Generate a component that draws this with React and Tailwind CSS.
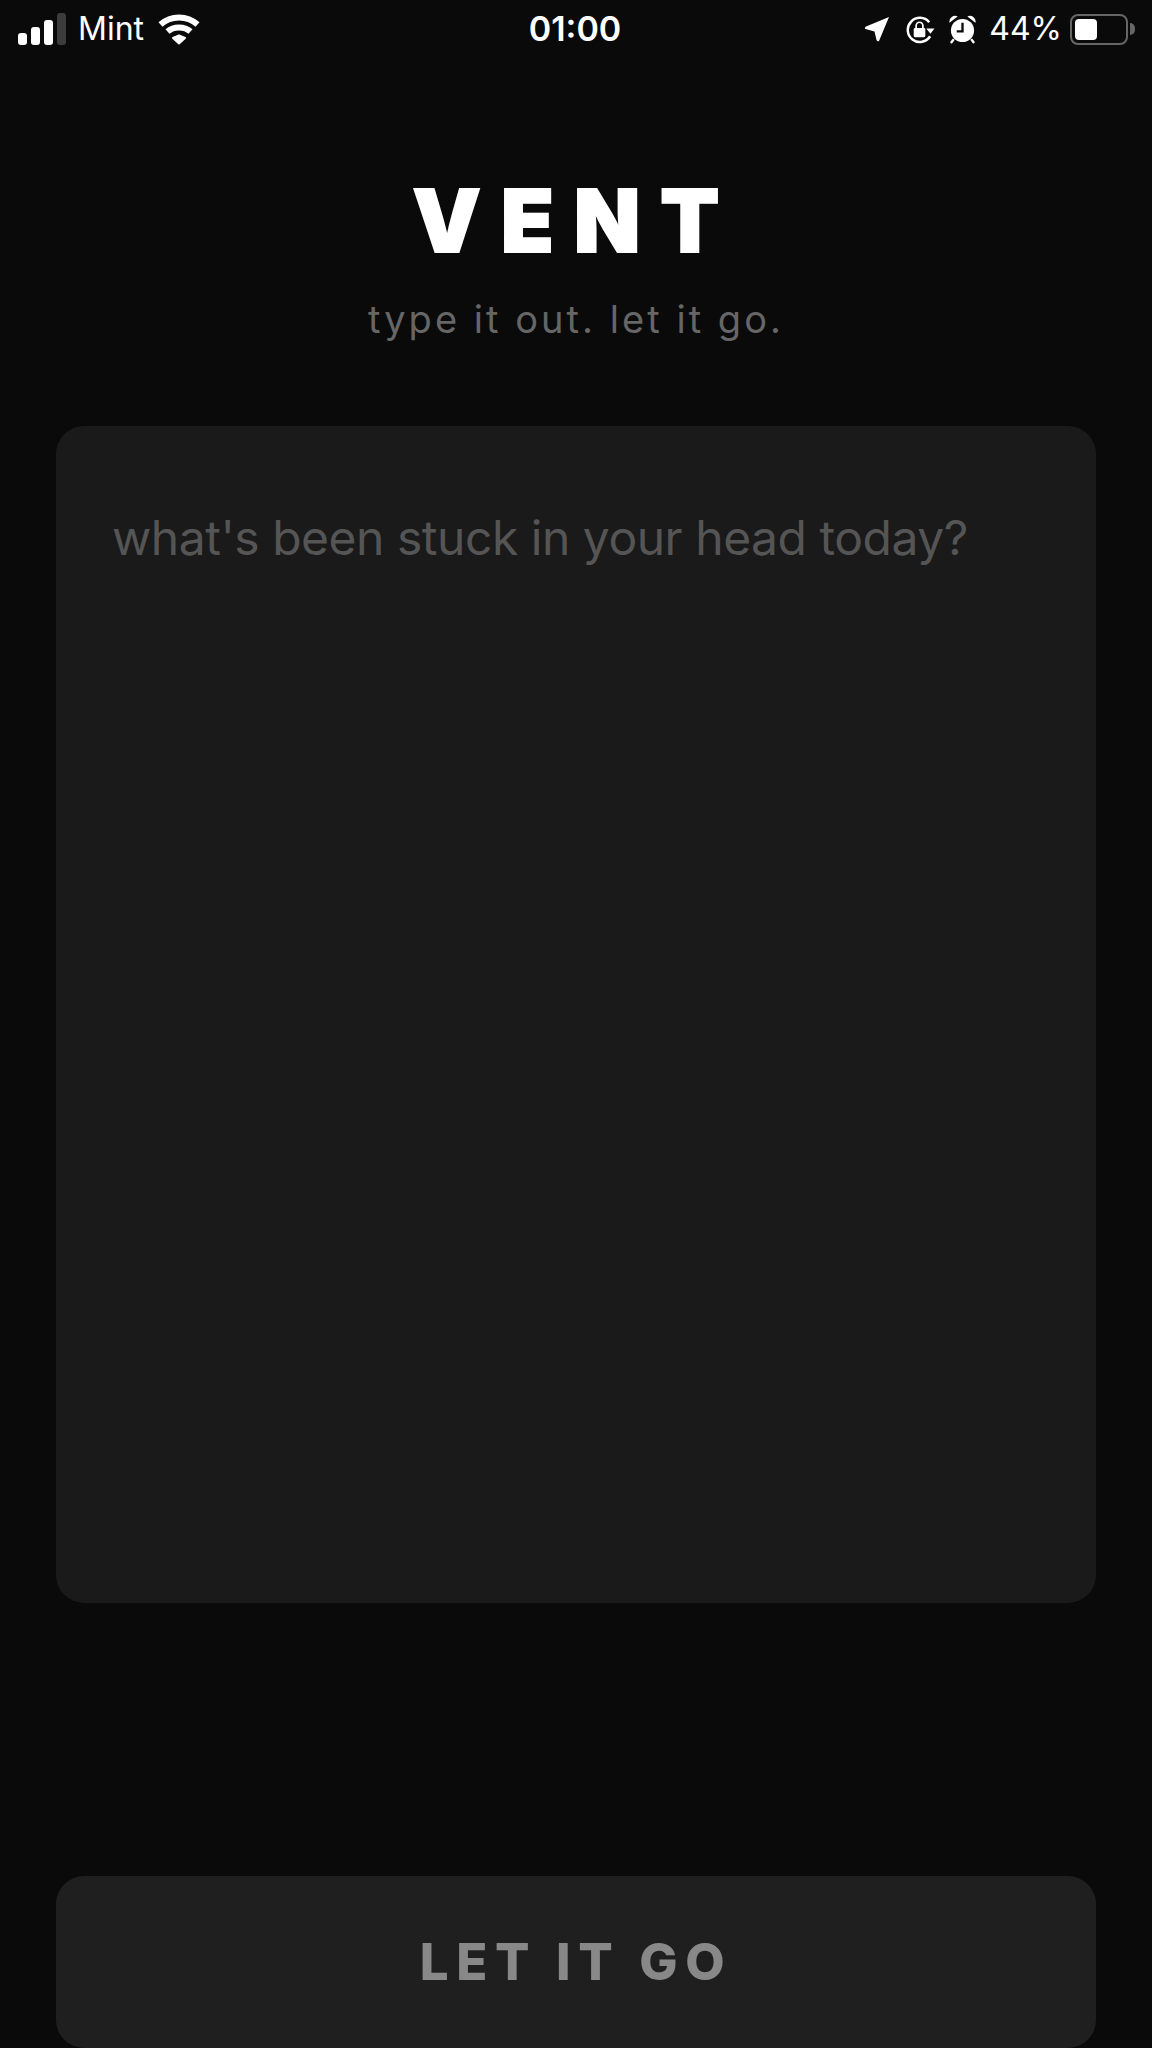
function SignalIcon() {
  return (
    <svg width="48" height="34" viewBox="0 0 48 34" fill="white">
      <rect x="0" y="21" width="9" height="12" rx="3" />
      <rect x="13" y="15" width="9" height="18" rx="3" />
      <rect x="26" y="8" width="9" height="25" rx="3" />
      <rect x="39" y="1" width="9" height="32" rx="3" fill="#3c3c3c" />
    </svg>
  );
}

function WifiIcon() {
  return (
    <svg width="42" height="32" viewBox="0 0 42 32" fill="none" stroke="white" strokeWidth="6">
      <path d="M2.5 11.5 C13 2 29 2 39.5 11.5" />
      <path d="M9.5 18.5 C15.5 13 26.5 13 32.5 18.5" />
      <path d="M15 25 L21 22.5 L27 25 L21 30.5 Z" fill="white" stroke="white" strokeWidth="2" strokeLinejoin="round" />
    </svg>
  );
}

function LocationIcon() {
  return (
    <svg width="26" height="26" viewBox="0 0 26 26" fill="white">
      <path d="M25 1 L15 25 Q13.5 26 12.5 24 L10.5 15.5 L1.5 13 Q0 12 2 10.5 Z" />
    </svg>
  );
}

function RotationLockIcon() {
  return (
    <svg width="30" height="29" viewBox="0 0 30 30" fill="none">
      <path d="M24.5 7.5 A12.5 12.5 0 1 0 25.5 22" stroke="white" strokeWidth="2.6" />
      <path d="M21.5 14 H30 L25.8 19.5 Z" fill="white" />
      <rect x="8.5" y="13.5" width="12" height="9.5" rx="1.5" fill="white" />
      <path d="M11 13.5 V11 A3.5 3.5 0 0 1 18 11 V13.5" stroke="white" strokeWidth="1.8" />
    </svg>
  );
}

function AlarmIcon() {
  return (
    <svg width="27" height="29" viewBox="0 0 28 30" fill="white">
      <circle cx="14" cy="16" r="12" />
      <path d="M0.5 8 A6 6 0 0 1 9 1.5 Z" />
      <path d="M27.5 8 A6 6 0 0 0 19 1.5 Z" />
      <path d="M5 25 L2 29 M23 25 L26 29" stroke="white" strokeWidth="2.4" />
      <path d="M14 8 V17 H8" stroke="#0a0a0a" strokeWidth="2.4" fill="none" />
    </svg>
  );
}

function BatteryIcon() {
  return (
    <div className="flex items-center gap-[2px]">
      <div className="flex h-[31px] w-[58px] items-center rounded-[8px] border-2 border-[#666666] p-[3px]">
        <div className="h-full w-[22px] rounded-[4px] bg-white" />
      </div>
      <div className="h-[12px] w-[5px] rounded-r-full bg-[#666666]" />
    </div>
  );
}

export default function App() {
  return (
    <div
      className="flex h-[2048px] flex-col overflow-hidden bg-[#0a0a0a] text-white"
      style={{ fontFamily: "Inter, 'Liberation Sans', sans-serif" }}
    >
      {/* Status bar */}
      <div className="grid h-[58px] grid-cols-3 items-center pl-[18px] pr-[17px]">
        <div className="flex items-center">
          <SignalIcon />
          <span className="ml-[12px] text-[32px] leading-none">Mint</span>
          <div className="ml-[14px]">
            <WifiIcon />
          </div>
        </div>
        <div className="pr-[3px] text-center text-[34px] font-semibold leading-none">01:00</div>
        <div className="flex items-center justify-end">
          <LocationIcon />
          <div className="ml-[15px]">
            <RotationLockIcon />
          </div>
          <div className="ml-[14px]">
            <AlarmIcon />
          </div>
          <span className="ml-[13px] text-[32px] leading-none">44%</span>
          <div className="ml-[8px]">
            <BatteryIcon />
          </div>
        </div>
      </div>

      {/* Title */}
      <div className="mt-[117px] text-center text-[86px] font-black leading-[92px] tracking-[0.235em] [-webkit-text-stroke:2px_white]">
        VENT
      </div>
      <div className="mt-[30px] text-center text-[38px] leading-[44px] tracking-[0.08em] text-[#666666]">
        type it out. let it go.
      </div>

      {/* Text area */}
      <div className="mx-[56px] mt-[85px] h-[1177px] shrink-0 rounded-[28px] bg-[#1a1a1a] px-[56px] py-[84px]">
        <div className="text-[48px] leading-[56px] tracking-[-0.01em] text-[#555555]">
          what's been stuck in your head today?
        </div>
      </div>

      {/* Button */}
      <div className="mx-[56px] mt-[273px] flex h-[172px] shrink-0 items-center justify-center rounded-[28px] bg-[#1f1f1f]">
        <span className="text-[51px] font-extrabold tracking-[0.15em] text-[#888888]">LET IT GO</span>
      </div>
    </div>
  );
}
